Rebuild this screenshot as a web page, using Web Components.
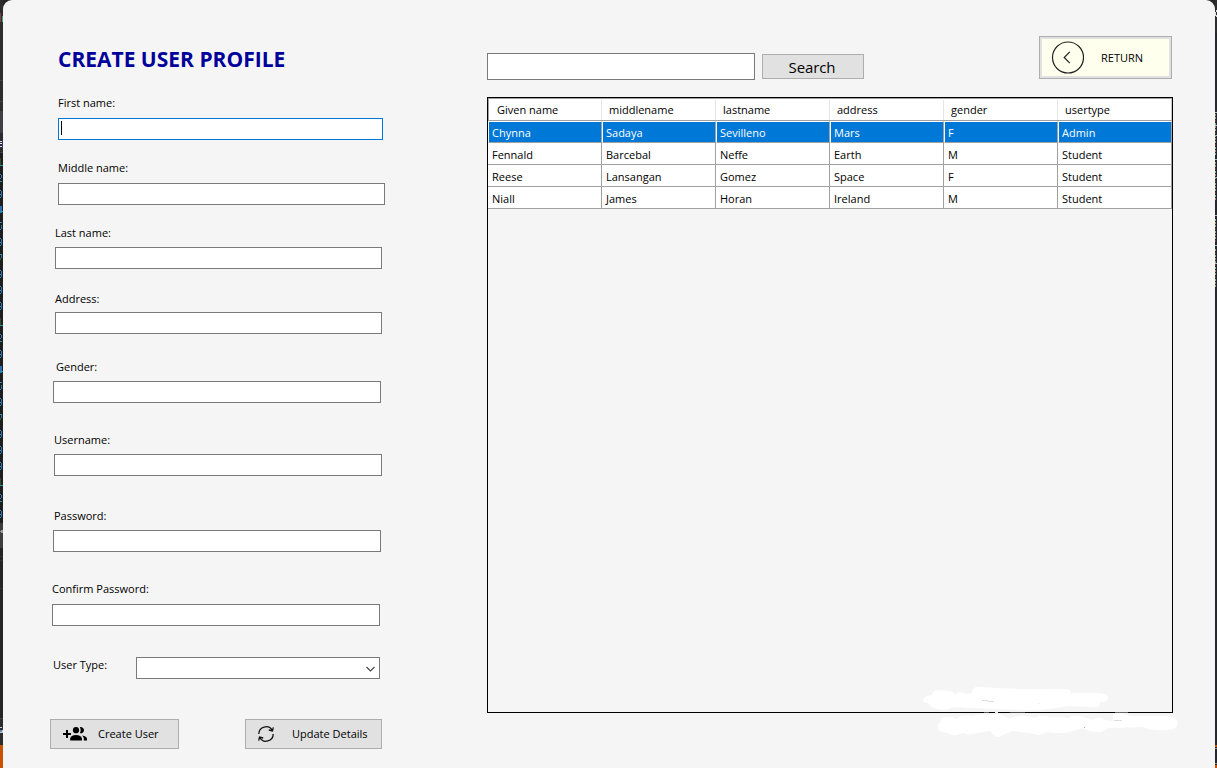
<!DOCTYPE html>
<html lang="en">
<head>
<meta charset="utf-8">
<title>Create User Profile</title>
<style>
html,body{margin:0;height:100%;overflow:hidden;background:#252528}
body{font:11px/16px "Open Sans","Noto Sans",sans-serif;color:#000}
</style>
</head>
<body>
<profile-app></profile-app>
<script>
const define = (name, html, setup) => customElements.define(name, class extends HTMLElement {
  constructor() {
    super();
    this.attachShadow({mode: 'open'}).innerHTML = html;
  }
  connectedCallback() { if (setup) setup(this, this.shadowRoot); }
});

/* Sliver of the code editor that shows beside the window */
define('editor-edge', `<style>
:host{display:block;width:3px;height:768px;background:#1e1e1e}
svg{display:block}</style><div></div>`, (el, root) => {
  const r = (y, h, c, x = 0, w = 3) => `<rect x="${x}" y="${y}" width="${w}" height="${h}" fill="${c}"/>`;
  let s = '';
  if (el.getAttribute('side') === 'left') {
    s += r(0,153,'#2d2d30') + r(13,9,'#70493a',0,1) + r(16,6,'#4f9c93',2,1) + r(80,1,'#3f3f46') + r(101,1,'#3f3f46') + r(111,22,'#3f3f46');
    s += r(141,1,'#ddd',0,2) + r(143,1,'#eee',0,2) + r(146,1,'#ddd',0,2) + r(141,7,'#3a3090',2,1) + r(152,1,'#3f3f46');
    for (let i = 0; i < 23; i++) {
      const y = 158 + Math.round(i * 16), d = '12345678901234567890123'[i];
      if (d === '1') s += r(y,7,'#27501f',0,1) + r(y+7,1,'#2b91af');
      else if (d === '2') s += r(y,1,'#2b7aaf',0,1) + r(y+1,3,'#2b6fae',1,1) + r(y+4,1,'#2b91af',0,1) + r(y+7,1,'#2b91af',0,2);
      else if (d === '4') s += r(y,7,'#2b6fae',0,2) + r(y+5,1,'#2b91af');
      else if (d === '5') s += r(y,1,'#2b91af',0,2) + r(y+3,4,'#2b6fae',1,1) + r(y+7,1,'#2b91af',0,1);
      else if (d === '7') s += r(y,1,'#2b91af',0,2) + r(y+1,3,'#2b6fae',1,1) + r(y+4,2,'#27602f',0,1);
      else s += r(y,1,'#2b91af',0,1) + r(y+1,6,'#2b6fae',1,1) + r(y+4,1,'#2b91af',0,1) + r(y+7,1,'#2b91af',0,1);
    }
    s += r(523,25,'#3e3e42') + r(530,3,'#999',1,2) + r(531,1,'#999') + r(548,197,'#252526') + r(556,1,'#46464a',1,1) + r(560,1,'#46464a',1,1) + r(588,1,'#333337') + r(718,1,'#3f3f46') + r(719,26,'#2d2d30') + r(727,1,'#ccc',0,2) + r(730,2,'#5b8bbd',0,2) + r(730,3,'#ccc',2,1) + r(732,1,'#ccc',0,2) + r(745,23,'#ca5100');
  } else {
    s += r(0,33,'#2d2d30') + r(33,735,'#24272b') + r(10,2,'#ddd',1,1) + r(12,4,'#ddd',0,1) + r(15,2,'#ddd',1,1);
    [112,125,135,159,177,215,245,263].forEach(y => s += r(y,1,'#aeb8bd'));
    for (let y = 114; y < 286; y += 3) {
      if ((y > 154 && y < 160) || (y > 199 && y < 218) || (y > 240 && y < 247)) continue;
      s += r(y,2,['#6d3b40','#8ba980','#a98b65','#86b48c'][y % 4],0,1);
    }
    s += r(745,2,'#ca5100') + r(748,1,'#888') + r(763,1,'#888') + r(765,3,'#ca5100');
  }
  root.querySelector('div').innerHTML = `<svg width="3" height="768" shape-rendering="crispEdges">${s}</svg>`;
});

define('text-box', `<style>
:host{display:block;box-sizing:border-box;height:22px;border:1px solid #7a7a7a;background:#fff}
:host([focused]){border-color:#0078d7}
i{display:none;width:1px;height:14px;margin:2px 0 0 2px;background:#000}
:host([focused]) i{display:block}
</style><i></i>`);

define('form-field', `<style>
:host{display:block;margin-top:var(--top,20px)}
label{display:block;height:16px;margin-left:var(--lx)}
text-box{width:var(--w,328px);margin:var(--gap,6px) 0 0 var(--x)}
</style><label><slot></slot></label><text-box></text-box>`, (el, root) => {
  if (el.hasAttribute('focused')) root.querySelector('text-box').setAttribute('focused', '');
});

define('select-box', `<style>
:host{display:flex;box-sizing:border-box;height:22px;border:1px solid #7a7a7a;background:#fff;align-items:center;justify-content:flex-end;padding-right:3px}
svg{margin-top:2px}
</style><svg width="11" height="8" viewBox="0 0 11 8"><path d="M1.500 2 5.500 6 9.500 2" fill="none" stroke="#444" stroke-width="1.1"/></svg>`);

define('push-button', `<style>
:host{display:flex;box-sizing:border-box;height:30px;border:1px solid #adadad;background:#e1e1e1;align-items:center}
::slotted(svg){flex:none}
</style><slot name="icon"></slot><slot></slot>`);

define('data-grid', `<style>
:host{display:block;box-sizing:border-box;width:686px;height:616px;border:1px solid #000}
.row{display:grid;grid-template-columns:repeat(6,114px);height:22px;background:#fff}
.row span{box-sizing:border-box;border-right:1px solid #a0a0a0;border-bottom:1px solid #a0a0a0;padding:3px 0 0 4px;line-height:18px;white-space:nowrap;overflow:hidden}
.head{height:23px;border-top:0}
.head span{border-top:1px solid #a0a0a0;border-right:0;padding:2px 0 0 7px;line-height:17px;background:linear-gradient(#e5e5e5,#e5e5e5) right 1px/1px 100% no-repeat}
.head span:first-child{border-left:1px solid #a0a0a0;padding-left:8px}
.head span:last-child{border-right:1px solid #c8c8c8;background:#fff}
.sel span{background:#0078d7;color:#fff;border-left:1px solid #fff;border-top:1px solid #fff;padding:2px 0 0 3px}
</style><div></div>`, (el, root) => {
  const rows = [
    ['Given name','middlename','lastname','address','gender','usertype'],
    ['Chynna','Sadaya','Sevilleno','Mars','F','Admin'],
    ['Fennald','Barcebal','Neffe','Earth','M','Student'],
    ['Reese','Lansangan','Gomez','Space','F','Student'],
    ['Niall','James','Horan','Ireland','M','Student']];
  root.querySelector('div').innerHTML = rows.map((r, i) =>
    `<div class="row ${i === 0 ? 'head' : i === 1 ? 'sel' : ''}">${r.map(c => `<span>${c}</span>`).join('')}</div>`).join('');
});

define('paint-strokes', `<style>:host{display:block}svg{display:block}</style>
<svg width="257" height="54" viewBox="0 0 257 54">
<g fill="#fff">
<path d="M0 14Q0 9 9 8Q10 3 15 3L28 4Q32 6 33 9Q33 5 38 5L43 7L49 6Q49 1 53 0L75 1Q105 3 125 2L143 2Q149 3 148 6L177 6Q186 7 185 12Q184 15 177 15Q178 20 173 20L145 19Q120 24 100 23L45 21L30 20Q24 24 14 22Q7 20 5 16Q1 16 0 14Z"/>
<path d="M15 40Q14 37 18 35Q16 31 22 30L30 30Q32 35 36 30Q42 27 50 29Q58 26 64 28L72 27Q81 27 86 32Q98 26 112 31Q116 27 128 30Q138 29 145 31Q153 26 163 31L170 33Q177 28 182 33L190 34L190 27Q199 24 207 29L241 29Q254 29 255 36Q254 42 246 43Q230 44 220 40L185 41Q180 46 173 45Q166 45 159 41L150 44Q140 47 134 46L123 45Q117 50 112 47L97 45Q90 43 87 45Q82 47 76 50Q71 50 67 44L54 46Q46 49 41 46L36 47Q31 50 25 46Q14 45 15 40Z"/>
</g>
<rect x="0" y="25" width="250" height="1" fill="#000"/>
<g fill="#ddd"><rect x="59" y="13" width="6" height="1"/><rect x="65" y="14" width="6" height="1"/><rect x="191" y="33" width="8" height="1"/><rect x="161" y="40" width="1" height="1" fill="#aaa"/><rect x="115" y="16" width="1" height="1"/></g>
<rect x="61" y="25" width="5" height="1" fill="#555"/><rect x="72" y="24" width="3" height="3" fill="#eee"/><rect x="87" y="25" width="15" height="1" fill="#444"/><rect x="192" y="25" width="13" height="1" fill="#666"/>
</svg>`);

define('profile-form', `<style>
:host{display:block;width:340px;padding-top:47px}
h1{margin:0 0 0 6px;height:48px;font-size:21px;line-height:24px;font-weight:700;color:#00009b;white-space:nowrap}
form-field{--lx:3px;--x:3px;--w:327px}
.type{display:flex;margin-top:31px}
.type label{width:84px;padding-left:1px;height:16px;box-sizing:border-box}
.type select-box{width:244px}
.actions{display:flex;margin-top:40px;margin-left:-2px;justify-content:space-between;width:332px}
</style>
<h1>CREATE USER PROFILE</h1>
<form-field focused style="--top:0;--lx:6px;--x:6px;--w:325px;--gap:7px">First name:</form-field>
<form-field style="--lx:6px;--x:6px;--gap:7px">Middle name:</form-field>
<form-field>Last name:</form-field>
<form-field style="--top:22px;--gap:5px">Address:</form-field>
<form-field style="--top:25px;--lx:4px;--x:1px;--w:328px">Gender:</form-field>
<form-field style="--top:29px;--lx:2px;--x:2px;--w:328px">Username:</form-field>
<form-field style="--top:32px;--lx:2px;--x:1px;--w:328px">Password:</form-field>
<form-field style="--top:29px;--lx:0px;--x:0px;--w:328px;--gap:7px">Confirm Password:</form-field>
<div class="type"><label>User Type:</label><select-box></select-box></div>
<div class="actions">
<push-button style="width:129px;padding-left:12px;gap:11px"><svg slot="icon" width="24" height="14" viewBox="0 0 24 14"><path d="M3 3h2v3h3v2H5v3H3V8H0V6h3z"/><circle cx="13" cy="3.2" r="3.1"/><path d="M7.2 13.6v-2Q7.8 8 13 8t6 3.6v2z"/><path d="M16.8.3a3.1 3.1 0 1 1 0 5.8Q18.6 3.2 16.8.3zM19 8.4q5 .7 5 3.4v1.8h-3.2v-2q0-1.900-1.800-3.200z"/></svg>Create User</push-button>
<push-button style="width:137px;padding-left:12px;gap:18px"><svg slot="icon" width="16" height="16" viewBox="0 0 16 16" fill="none" stroke="#111" stroke-width="1.3"><path d="M.8 8A7.200 7.200 0 0 1 14.300 4.500M15.200 8A7.200 7.200 0 0 1 1.700 11.500M15.300 1.300 14.500 5 10.800 4M.7 14.700 1.500 11 5.200 12"/></svg>Update Details</push-button>
</div>`);

define('users-panel', `<style>
:host{display:block;width:686px;padding-top:36px}
.bar{display:flex;height:61px;align-items:flex-start}
.bar text-box{width:268px;height:27px;margin-top:17px}
.search{width:102px;height:25px;margin:18px 0 0 7px;justify-content:center;font-size:15px;letter-spacing:-.1px;line-height:22px;padding-right:2px}
.return{width:133px;height:43px;margin-left:auto;margin-right:1px;background:#ffffed;box-shadow:inset 0 0 0 2px #e1e1e1;padding-left:11px;gap:17px}
</style>
<div class="bar"><text-box></text-box><push-button class="search">Search</push-button>
<push-button class="return"><svg slot="icon" width="33" height="34" viewBox="0 0 33 34" fill="none" stroke="#222" stroke-width="1.2"><circle cx="17" cy="16.500" r="15.500"/><path d="M18.800 10.800 13.200 16.500 18.800 22.200"/></svg>RETURN</push-button></div>
<data-grid></data-grid>`);

define('profile-app', `<style>
:host{display:flex;width:1217px;height:768px;position:relative;overflow:hidden}
main{flex:none;display:flex;box-sizing:border-box;width:1212px;height:768px;padding-left:49px;background:#f5f5f5;border-radius:9px 9px 0 0}
users-panel{margin-left:95px}
paint-strokes{position:absolute;left:923px;top:687px}
</style>
<editor-edge side="left"></editor-edge>
<main><profile-form></profile-form><users-panel></users-panel></main>
<editor-edge side="right"></editor-edge>
<paint-strokes></paint-strokes>`);
</script>
</body>
</html>
